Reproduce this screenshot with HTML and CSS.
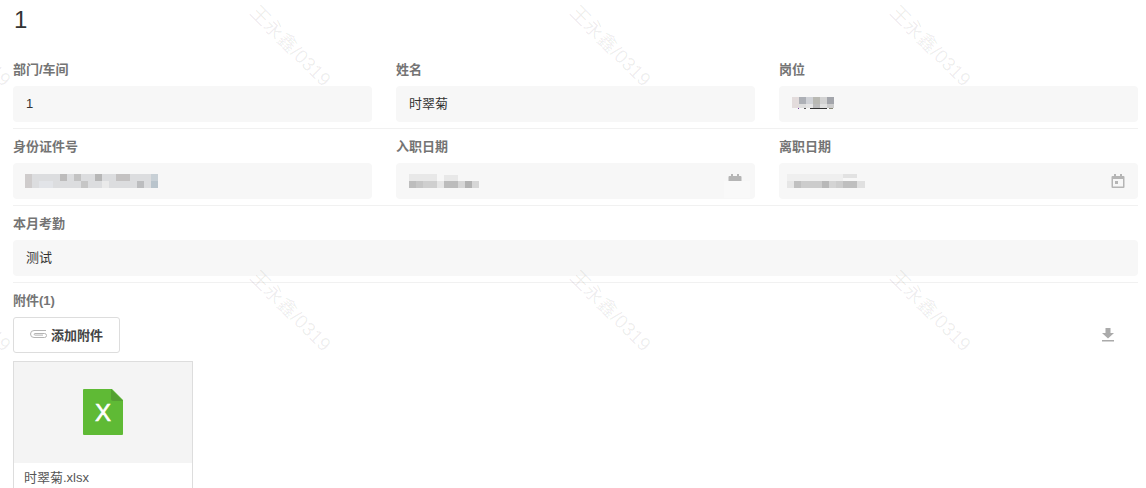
FILE: index.html
```html
<!DOCTYPE html>
<html lang="zh">
<head>
<meta charset="utf-8">
<title>1</title>
<link rel="stylesheet" href="styles.css">
</head>
<body>
<main class="page">
  <h1 class="title">1</h1>

  <section class="row row-3">
    <div class="field">
      <label class="label">部门/车间</label>
      <div class="input">1</div>
    </div>
    <div class="field">
      <label class="label">姓名</label>
      <div class="input">时翠菊</div>
    </div>
    <div class="field">
      <label class="label">岗位</label>
      <div class="input">
        <svg class="mosaic" width="48" height="14" viewBox="0 0 48 14" shape-rendering="crispEdges">
          <rect x="0" y="0" width="7" height="11" fill="#e3dcdc"/>
          <rect x="7" y="0" width="7" height="7" fill="#adb0b6"/>
          <rect x="14" y="0" width="7" height="7" fill="#d0d2d7"/>
          <rect x="21" y="0" width="7" height="7" fill="#b9b9b3"/>
          <rect x="28" y="0" width="7" height="7" fill="#d2d2d2"/>
          <rect x="35" y="0" width="7" height="7" fill="#a3a5ab"/>
          <rect x="7" y="7" width="7" height="4" fill="#dedede"/>
          <rect x="14" y="7" width="7" height="4" fill="#e5e5e5"/>
          <rect x="21" y="7" width="7" height="4" fill="#bbb"/>
          <rect x="28" y="7" width="7" height="4" fill="#e0e0e0"/>
          <rect x="35" y="7" width="7" height="4" fill="#ccc"/>
          <rect x="6" y="11" width="1" height="1" fill="#7a3fa0"/>
          <rect x="12" y="11" width="2" height="1" fill="#555"/>
          <rect x="18" y="11" width="17" height="1" fill="#333"/>
          <rect x="37" y="11" width="4" height="1" fill="#887"/>
        </svg>
      </div>
    </div>
  </section>

  <section class="row row-3">
    <div class="field">
      <label class="label">身份证件号</label>
      <div class="input">
        <svg class="mosaic" width="133" height="14" viewBox="0 0 133 14" shape-rendering="crispEdges">
          <rect width="133" height="14" fill="#dcdddf"/>
          <rect x="0" y="0" width="7" height="14" fill="#cfcccc"/>
          <rect x="14" y="7" width="14" height="7" fill="#e2e4e8"/>
          <rect x="35" y="0" width="7" height="7" fill="#bdbcbc"/>
          <rect x="49" y="0" width="7" height="7" fill="#c3c3c3"/>
          <rect x="56" y="7" width="7" height="7" fill="#c6c6c6"/>
          <rect x="70" y="0" width="7" height="7" fill="#b7b7b7"/>
          <rect x="77" y="7" width="7" height="7" fill="#eaeaea"/>
          <rect x="91" y="0" width="14" height="7" fill="#c4c2c2"/>
          <rect x="112" y="7" width="7" height="7" fill="#bcbdbf"/>
          <rect x="126" y="0" width="7" height="7" fill="#c8d0d6"/>
          <rect x="126" y="7" width="7" height="7" fill="#b9c4cc"/>
        </svg>
      </div>
    </div>
    <div class="field">
      <label class="label">入职日期</label>
      <div class="input input-date">
        <svg class="mosaic" width="70" height="14" viewBox="0 0 70 14" shape-rendering="crispEdges">
          <rect x="0" y="0" width="28" height="7" fill="#e8e8e8"/>
          <rect x="35" y="1" width="14" height="6" fill="#e8e8e8"/>
          <rect x="0" y="7" width="7" height="7" fill="#bdbdbd"/>
          <rect x="7" y="7" width="7" height="7" fill="#c6c6c6"/>
          <rect x="14" y="7" width="14" height="7" fill="#cfcfcf"/>
          <rect x="28" y="7" width="7" height="7" fill="#e6e6e6"/>
          <rect x="35" y="7" width="14" height="7" fill="#bcbcbc"/>
          <rect x="49" y="7" width="7" height="7" fill="#d6d6d6"/>
          <rect x="56" y="7" width="7" height="7" fill="#b2b2b2"/>
          <rect x="63" y="7" width="7" height="7" fill="#d6d6d6"/>
        </svg>
        <svg class="cal" width="14" height="14" viewBox="0 0 14 14">
          <path fill="#b5b5b5" d="M3 0h2v2h4V0h2v2h1.500A1 1 0 0 1 13.500 3v10a1 1 0 0 1-1 1h-11a1 1 0 0 1-1-1V3a1 1 0 0 1 1-1H3z"/>
        </svg>
        <div class="smudge"></div>
      </div>
    </div>
    <div class="field">
      <label class="label">离职日期</label>
      <div class="input input-date">
        <svg class="mosaic" width="78" height="14" viewBox="0 0 78 14" shape-rendering="crispEdges">
          <rect x="0" y="0" width="56" height="7" fill="#efefef"/>
          <rect x="56" y="0" width="14" height="4" fill="#e2e2e2"/>
          <rect x="0" y="7" width="7" height="7" fill="#e6e6e6"/>
          <rect x="7" y="7" width="7" height="7" fill="#c0c0c0"/>
          <rect x="14" y="7" width="21" height="7" fill="#cccccc"/>
          <rect x="35" y="7" width="7" height="7" fill="#b8b8b8"/>
          <rect x="42" y="7" width="7" height="7" fill="#d4d4d4"/>
          <rect x="49" y="7" width="7" height="7" fill="#cdcdcd"/>
          <rect x="56" y="7" width="14" height="7" fill="#bfbfbf"/>
          <rect x="70" y="7" width="8" height="7" fill="#e0e0e0"/>
        </svg>
        <svg class="cal" width="14" height="14" viewBox="0 0 14 14">
          <path fill="#b5b5b5" fill-rule="evenodd" d="M3 0h2v2h4V0h2v2h1.500A1 1 0 0 1 13.500 3v10a1 1 0 0 1-1 1h-11a1 1 0 0 1-1-1V3a1 1 0 0 1 1-1H3zM2 5v7.500h10V5zM4 7h3v3H4z"/>
        </svg>
      </div>
    </div>
  </section>

  <section class="row">
    <div class="field">
      <label class="label">本月考勤</label>
      <div class="input">测试</div>
    </div>
  </section>

  <section class="attach">
    <label class="label">附件(1)</label>
    <div class="attach-bar">
      <button class="btn" type="button">
        <svg width="18" height="10" viewBox="0 0 18 10" fill="none" stroke="#b4b4b4" stroke-width="1">
          <path d="M17 1.500H5a3.500 3.500 0 0 0 0 7h10.500a2 2 0 0 0 0-4H6a.8.8 0 0 0 0 1.600h8"/>
        </svg>
        <span>添加附件</span>
      </button>
      <svg class="download" width="12" height="14" viewBox="0 0 12 14">
        <path fill="#aaaaaa" d="M3.500 0h5v5H12L6 10.500 0 5h3.500zM0 12h12v1.500H0z"/>
      </svg>
    </div>
    <article class="file">
      <div class="file-thumb">
        <svg width="40" height="46" viewBox="0 0 40 46">
          <path fill="#5fba35" d="M1 0h28l11 11v34a1 1 0 0 1-1 1H1a1 1 0 0 1-1-1V1a1 1 0 0 1 1-1z"/>
          <path fill="#55a032" d="M28 0l12 12H30a2 2 0 0 1-2-2z"/>
          <text class="file-x" x="20" y="32" text-anchor="middle">X</text>
        </svg>
      </div>
      <div class="file-name">时翠菊.xlsx</div>
    </article>
  </section>
</main>

<div class="watermarks" aria-hidden="true">
  <span>王永鑫/0319</span><span>王永鑫/0319</span><span>王永鑫/0319</span><span>王永鑫/0319</span>
  <span>王永鑫/0319</span><span>王永鑫/0319</span><span>王永鑫/0319</span><span>王永鑫/0319</span>
</div>
</body>
</html>
```

FILE: styles.css
```css
html, body {
  margin: 0;
  padding: 0;
  height: 100%;
  overflow: hidden;
  background: #fff;
}

body {
  position: relative;
  font-family: "Liberation Sans", "Noto Sans CJK SC", sans-serif;
  font-size: 13px;
  color: #333;
}

.page {
  padding: 0 8px 0 13px;
}

.title {
  margin: 0;
  height: 52px;
  padding-left: 1px;
  box-sizing: border-box;
  font-size: 24px;
  font-weight: 400;
  line-height: 39px;
  color: #333;
}

.row {
  padding: 8px 0 6px;
  border-bottom: 1px solid #f1f1f1;
}

.row-3 {
  display: grid;
  grid-template-columns: repeat(3, 359px);
  column-gap: 24px;
}

.label {
  display: block;
  height: 20px;
  line-height: 20px;
  margin-bottom: 6px;
  font-size: 13px;
  font-weight: 700;
  color: #747474;
}

.input {
  position: relative;
  display: flex;
  align-items: center;
  height: 36px;
  padding: 0 13px;
  background: #f7f7f7;
  border-radius: 4px;
  line-height: 36px;
  color: #333;
}

.input-date {
  justify-content: space-between;
  padding-right: 13px;
}

.mosaic {
  display: block;
  flex: none;
}

.row-3:nth-of-type(2) .field:nth-child(1) .mosaic {
  margin-left: -1px;
}

.row-3:nth-of-type(2) .field:nth-child(3) .mosaic {
  margin-left: -5px;
}

.cal {
  display: block;
  flex: none;
}

.smudge {
  position: absolute;
  right: 5px;
  top: 18px;
  width: 26px;
  height: 17px;
  background: #f9f9f9;
}

.attach {
  padding-top: 8px;
}

.attach-bar {
  display: flex;
  align-items: center;
  justify-content: space-between;
  padding-right: 24px;
}

.btn {
  display: flex;
  align-items: center;
  justify-content: center;
  gap: 4px;
  width: 107px;
  height: 36px;
  padding: 0 0 2px;
  box-sizing: border-box;
  background: #fff;
  border: 1px solid #dddddd;
  border-radius: 3px;
  font: 700 13px "Liberation Sans", "Noto Sans CJK SC", sans-serif;
  color: #444;
}

.btn svg {
  margin-left: -1px;
}

.download {
  display: block;
}

.file {
  width: 178px;
  margin-top: 8px;
  border: 1px solid #dddddd;
}

.file-thumb {
  display: flex;
  align-items: center;
  justify-content: center;
  box-sizing: border-box;
  height: 101px;
  padding-bottom: 1px;
  background: #f4f4f4;
}

.file-thumb svg {
  display: block;
}

.file-x {
  font: 400 24px "Liberation Sans", sans-serif;
  fill: #fff;
  stroke: #fff;
  stroke-width: 0.6;
}

.file-name {
  height: 30px;
  padding-left: 10px;
  line-height: 30px;
  font-size: 13px;
  color: #555;
  background: #fff;
}

.watermarks {
  position: absolute;
  left: -188px;
  top: -88px;
  display: grid;
  grid-template-columns: repeat(4, 320px);
  grid-auto-rows: 265px;
  pointer-events: none;
}

.watermarks span {
  display: flex;
  align-items: center;
  justify-content: center;
  transform: rotate(45deg);
  font-size: 19px;
  white-space: nowrap;
  color: rgba(0, 0, 0, 0.07);
}
```
